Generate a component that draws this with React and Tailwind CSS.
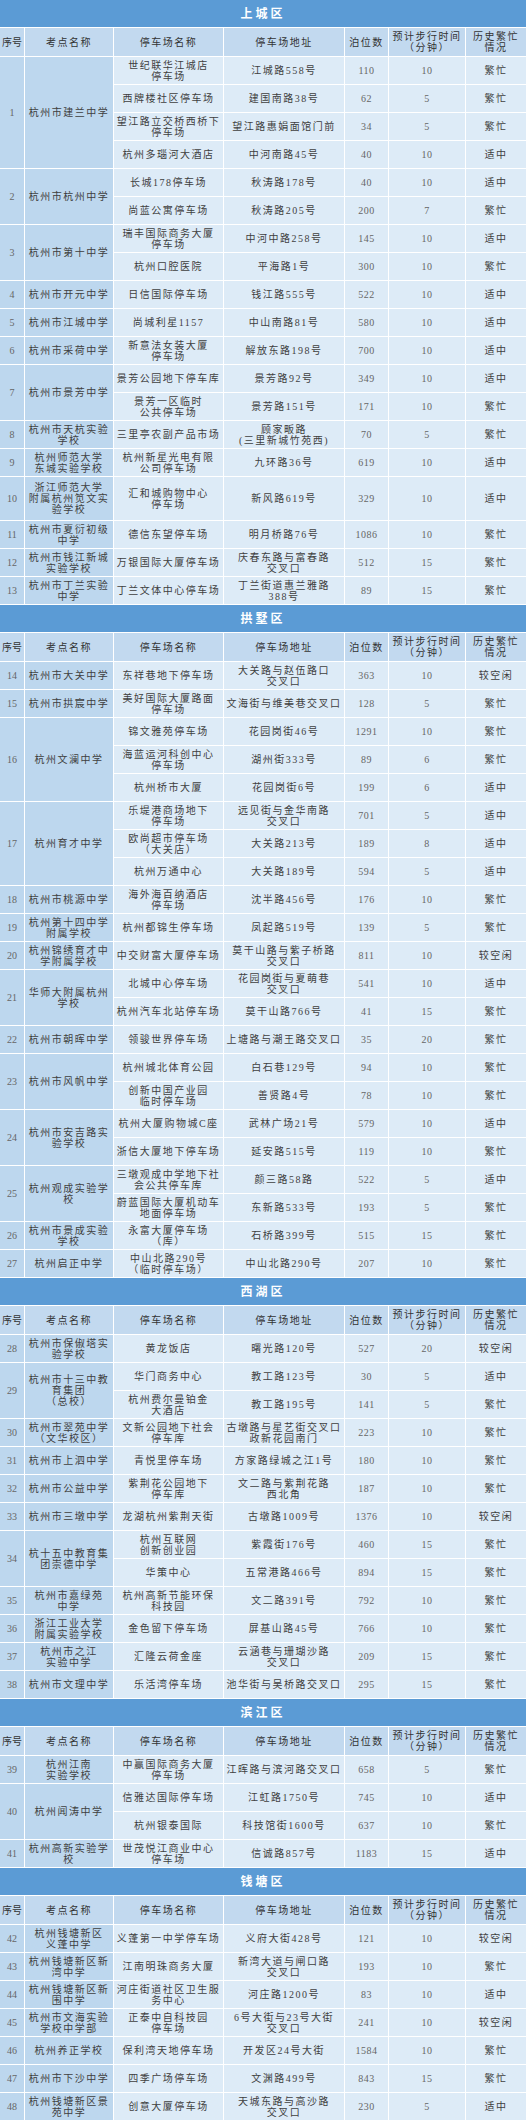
const sections = [
  {
    name: '上城区',
    schools: [
      [1, '杭州市建兰中学', [
        ['世纪联华江城店\n停车场', '江城路558号', '110', '10', '繁忙'],
        ['西牌楼社区停车场', '建国南路38号', '62', '5', '繁忙'],
        ['望江路立交桥西桥下\n停车场', '望江路惠娟面馆门前', '34', '5', '繁忙'],
        ['杭州多瑙河大酒店', '中河南路45号', '40', '10', '适中'],
      ]],
      [2, '杭州市杭州中学', [
        ['长城178停车场', '秋涛路178号', '40', '10', '适中'],
        ['尚蓝公寓停车场', '秋涛路205号', '200', '7', '繁忙'],
      ]],
      [3, '杭州市第十中学', [
        ['瑞丰国际商务大厦\n停车场', '中河中路258号', '145', '10', '适中'],
        ['杭州口腔医院', '平海路1号', '300', '10', '繁忙'],
      ]],
      [4, '杭州市开元中学', [['日信国际停车场', '钱江路555号', '522', '10', '适中']]],
      [5, '杭州市江城中学', [['尚城利星1157', '中山南路81号', '580', '10', '适中']]],
      [6, '杭州市采荷中学', [['新意法女装大厦\n停车场', '解放东路198号', '700', '10', '适中']]],
      [7, '杭州市景芳中学', [
        ['景芳公园地下停车库', '景芳路92号', '349', '10', '适中'],
        ['景芳一区临时\n公共停车场', '景芳路151号', '171', '10', '繁忙'],
      ]],
      [8, '杭州市天杭实验\n学校', [['三里亭农副产品市场', '顾家畈路\n(三里新城竹苑西)', '70', '5', '繁忙']]],
      [9, '杭州师范大学\n东城实验学校', [['杭州新星光电有限\n公司停车场', '九环路36号', '619', '10', '适中']]],
      [10, '浙江师范大学\n附属杭州笕文实\n验学校', [['汇和城购物中心\n停车场', '新风路619号', '329', '10', '适中']], true],
      [11, '杭州市夏衍初级\n中学', [['德信东望停车场', '明月桥路76号', '1086', '10', '繁忙']]],
      [12, '杭州市钱江新城\n实验学校', [['万银国际大厦停车场', '庆春东路与富春路\n交叉口', '512', '15', '繁忙']]],
      [13, '杭州市丁兰实验\n中学', [['丁兰文体中心停车场', '丁兰街道惠兰雅路\n388号', '89', '15', '繁忙']]],
    ],
  },
  {
    name: '拱墅区',
    schools: [
      [14, '杭州市大关中学', [['东祥巷地下停车场', '大关路与赵伍路口\n交叉口', '363', '10', '较空闲']]],
      [15, '杭州市拱宸中学', [['美好国际大厦路面\n停车场', '文海街与维美巷交叉口', '128', '5', '繁忙']]],
      [16, '杭州文澜中学', [
        ['锦文雅苑停车场', '花园岗街46号', '1291', '10', '繁忙'],
        ['海蓝运河科创中心\n停车场', '湖州街333号', '89', '6', '繁忙'],
        ['杭州桥市大厦', '花园岗街6号', '199', '6', '适中'],
      ]],
      [17, '杭州育才中学', [
        ['乐堤港商场地下\n停车场', '远见街与金华南路\n交叉口', '701', '5', '适中'],
        ['欧尚超市停车场\n（大关店）', '大关路213号', '189', '8', '适中'],
        ['杭州万通中心', '大关路189号', '594', '5', '适中'],
      ]],
      [18, '杭州市桃源中学', [['海外海百纳酒店\n停车场', '沈半路456号', '176', '10', '繁忙']]],
      [19, '杭州第十四中学\n附属学校', [['杭州都锦生停车场', '凤起路519号', '139', '5', '繁忙']]],
      [20, '杭州锦绣育才中\n学附属学校', [['中交财富大厦停车场', '莫干山路与紫子桥路\n交叉口', '811', '10', '较空闲']]],
      [21, '华师大附属杭州\n学校', [
        ['北城中心停车场', '花园岗街与夏萌巷\n交叉口', '541', '10', '适中'],
        ['杭州汽车北站停车场', '莫干山路766号', '41', '15', '繁忙'],
      ]],
      [22, '杭州市朝晖中学', [['领骏世界停车场', '上塘路与潮王路交叉口', '35', '20', '繁忙']]],
      [23, '杭州市风帆中学', [
        ['杭州城北体育公园', '白石巷129号', '94', '10', '繁忙'],
        ['创新中国产业园\n临时停车场', '善贤路4号', '78', '10', '繁忙'],
      ]],
      [24, '杭州市安吉路实\n验学校', [
        ['杭州大厦购物城C座', '武林广场21号', '579', '10', '适中'],
        ['浙信大厦地下停车场', '延安路515号', '119', '10', '繁忙'],
      ]],
      [25, '杭州观成实验学\n校', [
        ['三墩观成中学地下社\n会公共停车库', '颜三路58路', '522', '5', '适中'],
        ['蔚蓝国际大厦机动车\n地面停车场', '东新路533号', '193', '5', '繁忙'],
      ]],
      [26, '杭州市景成实验\n学校', [['永富大厦停车场\n（库）', '石桥路399号', '515', '15', '繁忙']]],
      [27, '杭州启正中学', [['中山北路290号\n（临时停车场）', '中山北路290号', '207', '10', '繁忙']]],
    ],
  },
  {
    name: '西湖区',
    schools: [
      [28, '杭州市保俶塔实\n验学校', [['黄龙饭店', '曙光路120号', '527', '20', '较空闲']]],
      [29, '杭州市十三中教\n育集团\n（总校）', [
        ['华门商务中心', '教工路123号', '30', '5', '适中'],
        ['杭州费尔曼铂金\n大酒店', '教工路195号', '141', '5', '繁忙'],
      ]],
      [30, '杭州市翠苑中学\n（文华校区）', [['文新公园地下社会\n停车库', '古墩路与星艺街交叉口\n政新花园南门', '223', '10', '繁忙']]],
      [31, '杭州市上泗中学', [['青悦里停车场', '方家路绿城之江1号', '180', '10', '繁忙']]],
      [32, '杭州市公益中学', [['紫荆花公园地下\n停车库', '文二路与紫荆花路\n西北角', '187', '10', '繁忙']]],
      [33, '杭州市三墩中学', [['龙湖杭州紫荆天街', '古墩路1009号', '1376', '10', '较空闲']]],
      [34, '杭十五中教育集\n团崇德中学', [
        ['杭州互联网\n创新创业园', '紫霞街176号', '460', '15', '繁忙'],
        ['华策中心', '五常港路466号', '894', '15', '繁忙'],
      ]],
      [35, '杭州市嘉绿苑\n中学', [['杭州高新节能环保\n科技园', '文二路391号', '792', '10', '繁忙']]],
      [36, '浙江工业大学\n附属实验学校', [['金色留下停车场', '屏基山路45号', '766', '10', '繁忙']]],
      [37, '杭州市之江\n实验中学', [['汇隆云荷金座', '云涵巷与珊瑚沙路\n交叉口', '209', '15', '繁忙']]],
      [38, '杭州市文理中学', [['乐活湾停车场', '池华街与吴桥路交叉口', '295', '15', '繁忙']]],
    ],
  },
  {
    name: '滨江区',
    schools: [
      [39, '杭州江南\n实验学校', [['中赢国际商务大厦\n停车场', '江晖路与滨河路交叉口', '658', '5', '繁忙']]],
      [40, '杭州闻涛中学', [
        ['信雅达国际停车场', '江虹路1750号', '745', '10', '适中'],
        ['杭州银泰国际', '科技馆街1600号', '637', '10', '繁忙'],
      ]],
      [41, '杭州高新实验学\n校', [['世茂悦江商业中心\n停车场', '信诚路857号', '1183', '15', '适中']]],
    ],
  },
  {
    name: '钱塘区',
    schools: [
      [42, '杭州钱塘新区\n义蓬中学', [['义蓬第一中学停车场', '义府大街428号', '121', '10', '较空闲']]],
      [43, '杭州钱塘新区新\n湾中学', [['江南明珠商务大厦', '新湾大道与闸口路\n交叉口', '193', '10', '繁忙']]],
      [44, '杭州钱塘新区新\n围中学', [['河庄街道社区卫生服\n务中心', '河庄路1200号', '83', '10', '适中']]],
      [45, '杭州市文海实验\n学校中学部', [['正泰中自科技园\n停车场', '6号大街与23号大街\n交叉口', '241', '10', '较空闲']]],
      [46, '杭州养正学校', [['保利湾天地停车场', '开发区24号大街', '1584', '10', '繁忙']]],
      [47, '杭州市下沙中学', [['四季广场停车场', '文渊路499号', '843', '15', '繁忙']]],
      [48, '杭州钱塘新区景\n苑中学', [['创意大厦停车场', '天城东路与高沙路\n交叉口', '230', '5', '适中']]],
    ],
  },
]

const spans = { 1: 'row-span-1', 2: 'row-span-2', 3: 'row-span-3', 4: 'row-span-4' }

const headers = ['序号', '考点名称', '停车场名称', '停车场地址', '泊位数', '预计步行时间\n（分钟）', '历史繁忙\n情况']

function Cell({ children, className = '' }) {
  return (
    <div className={`flex items-center justify-center text-center whitespace-pre leading-[11px] ${className}`}>
      {children}
    </div>
  )
}

function Section({ name, schools }) {
  return (
    <div className="flex flex-col gap-px">
      <div className="h-[27px] flex items-center justify-center bg-[#5b9bd5] text-white text-[12px] font-bold tracking-[3px]">
        {name}
      </div>
      <div className="grid grid-cols-[24px_88px_109px_120px_43px_76px_60px] auto-rows-[minmax(27px,auto)] gap-px">
        {headers.map((h, i) => (
          <Cell key={h} className={`h-[28px] bg-[#c2d9ef] text-[#333] ${i === 0 ? 'tracking-[0px]' : ''}`}>
            {h}
          </Cell>
        ))}
        {schools.map(([no, school, lots, tall]) => [
          <Cell key={`n${no}`} className={`${spans[lots.length]} bg-[#bdd7ee] text-[#666] tracking-[0px]`}>
            {no}
          </Cell>,
          <Cell key={`s${no}`} className={`${spans[lots.length]} bg-[#bdd7ee] ${tall ? 'py-[5px]' : ''}`}>
            {school}
          </Cell>,
          ...lots.map((lot, j) =>
            lot.map((v, k) => (
              <Cell
                key={`${no}-${j}-${k}`}
                className={`bg-[#ddebf7] ${k === 2 || k === 3 ? 'text-[#666] tracking-[0.5px]' : ''}`}
              >
                {v}
              </Cell>
            ))
          ),
        ])}
      </div>
    </div>
  )
}

export default function App() {
  return (
    <div
      className="w-[526px] bg-white flex flex-col gap-px text-[10px] tracking-[1.5px] text-[#3f3f3f]"
      style={{ fontFamily: '"Liberation Serif", "Noto Sans CJK SC", serif' }}
    >
      {sections.map((s) => (
        <Section key={s.name} {...s} />
      ))}
    </div>
  )
}
